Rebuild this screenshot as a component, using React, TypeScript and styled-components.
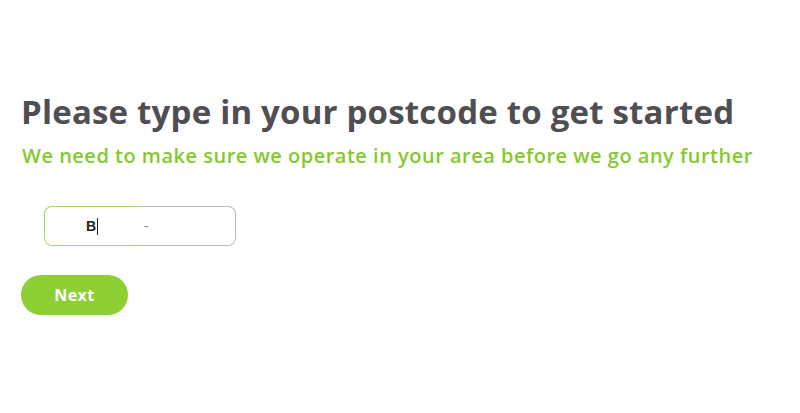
import styled, { createGlobalStyle } from "styled-components";

const GlobalStyle = createGlobalStyle`
  html, body {
    margin: 0;
    padding: 0;
    background: #ffffff;
    font-family: "Open Sans", "Noto Sans", sans-serif;
  }
`;

const Page = styled.div`
  width: 800px;
  height: 413px;
  box-sizing: border-box;
  padding: 92px 0 0 21px;
  display: flex;
  flex-direction: column;
`;

const Title = styled.h1`
  margin: 0;
  font-size: 33px;
  line-height: 40px;
  font-weight: 700;
  color: #4f4e52;
  letter-spacing: 0.2px;
`;

const SubTitle = styled.h2`
  margin: 11px 0 0 1px;
  font-size: 20px;
  line-height: 26px;
  font-weight: 600;
  color: #86c92e;
  letter-spacing: 0.5px;
`;

const PostcodeBox = styled.div`
  margin: 37px 0 0 23px;
  display: flex;
  width: 192px;
  height: 40px;
`;

const Segment = styled.div<{ $side: "left" | "right" }>`
  display: flex;
  align-items: center;
  box-sizing: border-box;
  border: 1px solid ${(p) => (p.$side === "left" ? "#a6d86a" : "#bdbdbd")};
  ${(p) =>
    p.$side === "left"
      ? "width: 96px; border-right: none; border-radius: 8px 0 0 8px; justify-content: flex-end; padding-right: 42px;"
      : "flex: 1; border-left: none; border-radius: 0 8px 8px 0; padding-left: 4px;"}
  font-family: "Liberation Sans", Arial, sans-serif;
  font-size: 14px;
`;

const Typed = styled.span`
  font-weight: 700;
  color: #222;
  border-right: 1px solid #222;
  padding-right: 1px;
  line-height: 17px;
`;

const Dash = styled.span`
  color: #888;
`;

const NextButton = styled.button`
  margin-top: 29px;
  width: 107px;
  height: 40px;
  border: none;
  border-radius: 20px;
  background: #8ecf33;
  color: #ffffff;
  font-family: "Open Sans", "Noto Sans", sans-serif;
  font-weight: 700;
  font-size: 16px;
  letter-spacing: 0.4px;
  cursor: pointer;
`;

export default function App() {
  return (
    <>
      <GlobalStyle />
      <Page>
        <Title>Please type in your postcode to get started</Title>
        <SubTitle>We need to make sure we operate in your area before we go any further</SubTitle>
        <PostcodeBox>
          <Segment $side="left">
            <Typed>B</Typed>
          </Segment>
          <Segment $side="right">
            <Dash>-</Dash>
          </Segment>
        </PostcodeBox>
        <NextButton>Next</NextButton>
      </Page>
    </>
  );
}
